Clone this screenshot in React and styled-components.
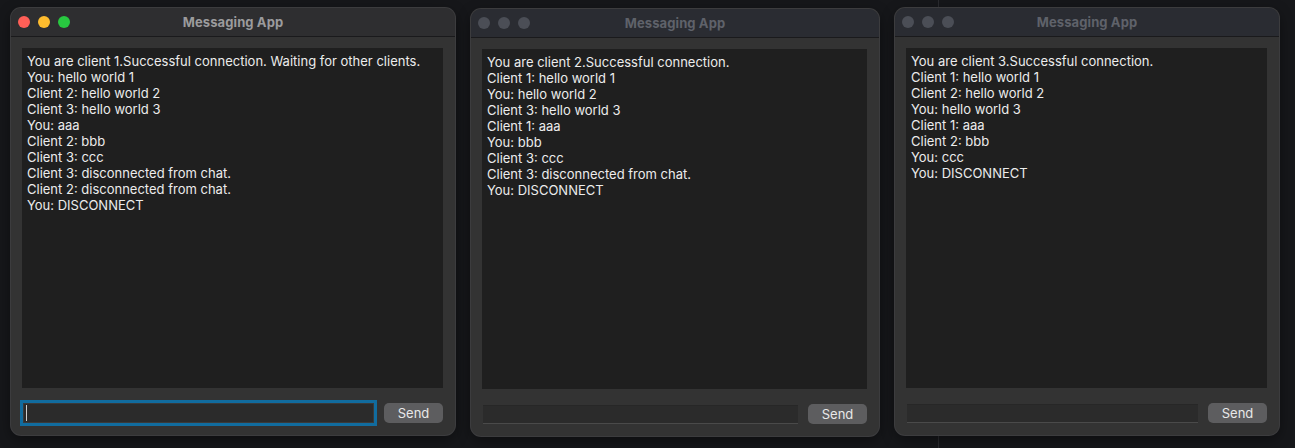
import React from "react";
import styled, { createGlobalStyle } from "styled-components";

const Global = createGlobalStyle`
  html, body { margin: 0; padding: 0; }
  body {
    width: 1295px;
    height: 448px;
    overflow: hidden;
    background-color: #16171a;
    background-image: linear-gradient(to right, transparent 938px, #2a2b2f 938px, #2a2b2f 939px, transparent 939px);
    font-family: Inter, "Noto Sans", "Liberation Sans", sans-serif;
  }
`;

const Desktop = styled.div`
  display: flex;
  align-items: flex-start;
  gap: 16px;
  padding: 8px 0 0 11px;
`;

const Window = styled.div`
  width: ${(p) => p.$w}px;
  height: 427px;
  margin-top: ${(p) => p.$dy || 0}px;
  box-sizing: border-box;
  display: flex;
  flex-direction: column;
  background: #333333;
  border-radius: 10px;
  box-shadow: 0 0 0 1px #3c3c3e, 0 4px 14px rgba(0, 0, 0, 0.45);
  overflow: hidden;
`;

const TitleBar = styled.div`
  position: relative;
  height: 28px;
  flex: none;
  display: flex;
  align-items: center;
  justify-content: center;
  background: ${(p) => (p.$active ? "#2e2e30" : "#2a2c32")};
  border-bottom: 1px solid #1a1a1c;
`;

const Lights = styled.div`
  position: absolute;
  left: 7px;
  top: 8px;
  display: flex;
  gap: 8px;
`;

const Light = styled.span`
  display: block;
  flex: none;
  width: 12px;
  height: 12px;
  border-radius: 50%;
  background: ${(p) => p.$c};
`;

const Title = styled.span`
  font-size: 13px;
  font-weight: 700;
  color: ${(p) => (p.$active ? "#9b9b9d" : "#5f626a")};
  letter-spacing: 0.1px;
`;

const Content = styled.div`
  flex: 1;
  display: flex;
  flex-direction: column;
  padding: 11px 12px 12px 11px;
  min-height: 0;
`;

const Log = styled.div`
  flex: 1;
  background: #1f1f1f;
  padding: 5px 5px;
  color: #ececec;
  font-size: 13px;
  line-height: 16px;
  white-space: pre;
  overflow: hidden;
`;

const Line = styled.div``;

const InputRow = styled.div`
  display: flex;
  align-items: center;
  gap: 10px;
  padding-top: 15px;
  height: 20px;
`;

const Field = styled.div`
  flex: 1;
  margin-left: 1px;
  height: 19px;
  box-sizing: border-box;
  background: #2b2b2b;
  border-top: 1px solid #272727;
  border-bottom: 1px solid #4a4a4a;
  display: flex;
  align-items: center;
  padding-left: 2px;
  ${(p) =>
    p.$focused &&
    `
    height: 20px;
    border: 1px solid #3a3a3a;
    outline: 3px solid #116c9f;
    outline-offset: 0;
  `}
`;

const Caret = styled.span`
  width: 1px;
  height: 16px;
  background: #cfcfcf;
`;

const SendButton = styled.button`
  width: 59px;
  height: 20px;
  flex: none;
  border: none;
  border-radius: 5px;
  background: #5d5d5f;
  color: #e8e8e8;
  font-family: inherit;
  font-size: 13px;
  padding: 0;
  line-height: 20px;
`;

const windows = [
  {
    w: 444,
    active: true,
    lines: [
      "You are client 1.Successful connection. Waiting for other clients.",
      "You: hello world 1",
      "Client 2: hello world 2",
      "Client 3: hello world 3",
      "You: aaa",
      "Client 2: bbb",
      "Client 3: ccc",
      "Client 3: disconnected from chat.",
      "Client 2: disconnected from chat.",
      "You: DISCONNECT",
    ],
  },
  {
    w: 408,
    dy: 1,
    lines: [
      "You are client 2.Successful connection.",
      "Client 1: hello world 1",
      "You: hello world 2",
      "Client 3: hello world 3",
      "Client 1: aaa",
      "You: bbb",
      "Client 3: ccc",
      "Client 3: disconnected from chat.",
      "You: DISCONNECT",
    ],
  },
  {
    w: 384,
    lines: [
      "You are client 3.Successful connection.",
      "Client 1: hello world 1",
      "Client 2: hello world 2",
      "You: hello world 3",
      "Client 1: aaa",
      "Client 2: bbb",
      "You: ccc",
      "You: DISCONNECT",
    ],
  },
];

function ChatWindow({ w, dy, active, lines }) {
  const colors = active
    ? ["#ff5f57", "#febc2e", "#28c840"]
    : ["#4b4e56", "#4b4e56", "#4b4e56"];
  return (
    <Window $w={w} $dy={dy}>
      <TitleBar $active={active}>
        <Lights>
          {colors.map((c, i) => (
            <Light key={i} $c={c} />
          ))}
        </Lights>
        <Title $active={active}>Messaging App</Title>
      </TitleBar>
      <Content>
        <Log>
          {lines.map((l, i) => (
            <Line key={i}>{l}</Line>
          ))}
        </Log>
        <InputRow>
          <Field $focused={active}>{active && <Caret />}</Field>
          <SendButton>Send</SendButton>
        </InputRow>
      </Content>
    </Window>
  );
}

export default function App() {
  return (
    <>
      <Global />
      <Desktop>
        {windows.map((win, i) => (
          <ChatWindow key={i} {...win} />
        ))}
      </Desktop>
    </>
  );
}
